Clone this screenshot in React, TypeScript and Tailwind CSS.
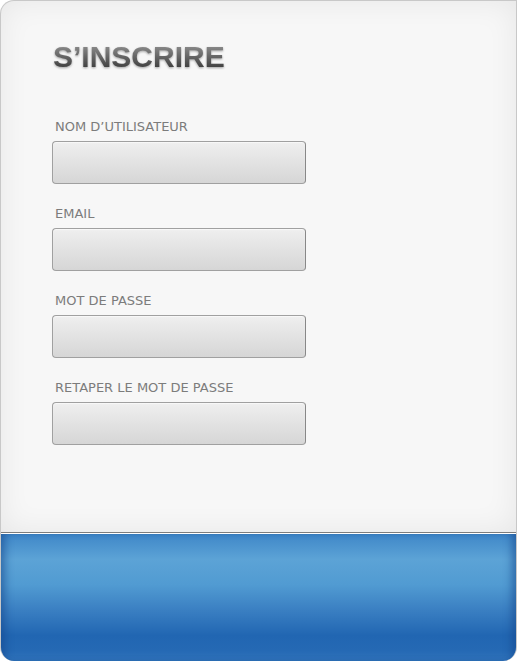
import React from "react";

const fields = [
  "NOM D\u2019UTILISATEUR",
  "EMAIL",
  "MOT DE PASSE",
  "RETAPER LE MOT DE PASSE",
];

export default function App() {
  return (
    <div className="w-[517px] h-[661px] bg-white" style={{ fontFamily: "'DejaVu Sans', sans-serif" }}>
      <div className="w-[517px] h-[661px] flex flex-col rounded-tl-[14px] rounded-b-[14px] overflow-hidden border-t border-r border-l border-[#c8c8c8] bg-[#f7f7f7]">
        <div className="h-[531px] flex flex-col pl-[51px] pt-[39px] shadow-[inset_0_0_30px_rgba(0,0,0,0.07)]">
          <h1
            className="text-[30px] leading-[34px] font-bold pl-[1px] bg-gradient-to-b from-[#a0a0a0] to-[#2e2e2e] bg-clip-text text-transparent [filter:drop-shadow(0_1px_1px_rgba(0,0,0,0.35))]"
            style={{ fontFamily: "'Liberation Sans', Arial, sans-serif" }}
          >
            S&rsquo;INSCRIRE
          </h1>
          <div className="flex flex-col mt-[45px] gap-[22px]">
            {fields.map((f) => (
              <div key={f} className="flex flex-col">
                <label className="pl-[3px] text-[13px] leading-[16px] text-[#7c7c7c] h-[22px]" style={{ fontFamily: "Tahoma, 'DejaVu Sans', sans-serif" }}>
                  {f}
                </label>
                <div className="w-[254px] h-[43px] rounded-[4px] border border-[#a0a0a0] border-r-[#888] bg-gradient-to-b from-[#efefef] to-[#d6d6d6] shadow-[inset_0_1px_1px_rgba(255,255,255,0.6)]" />
              </div>
            ))}
          </div>
        </div>
        <div className="h-[1px] bg-[#7d7d7d]" />
        <div className="h-[1px] bg-white" />
        <div className="flex-1 bg-[linear-gradient(to_bottom,#3f87c8_0%,#5ca3d6_20%,#519bd2_40%,#3a7fc2_60%,#2166b2_80%,#2569b4_92%,#3174bb_100%)] shadow-[inset_8px_0_8px_-4px_rgba(20,70,140,0.6),inset_-8px_0_8px_-4px_rgba(20,70,140,0.6)]" />
      </div>
    </div>
  );
}
